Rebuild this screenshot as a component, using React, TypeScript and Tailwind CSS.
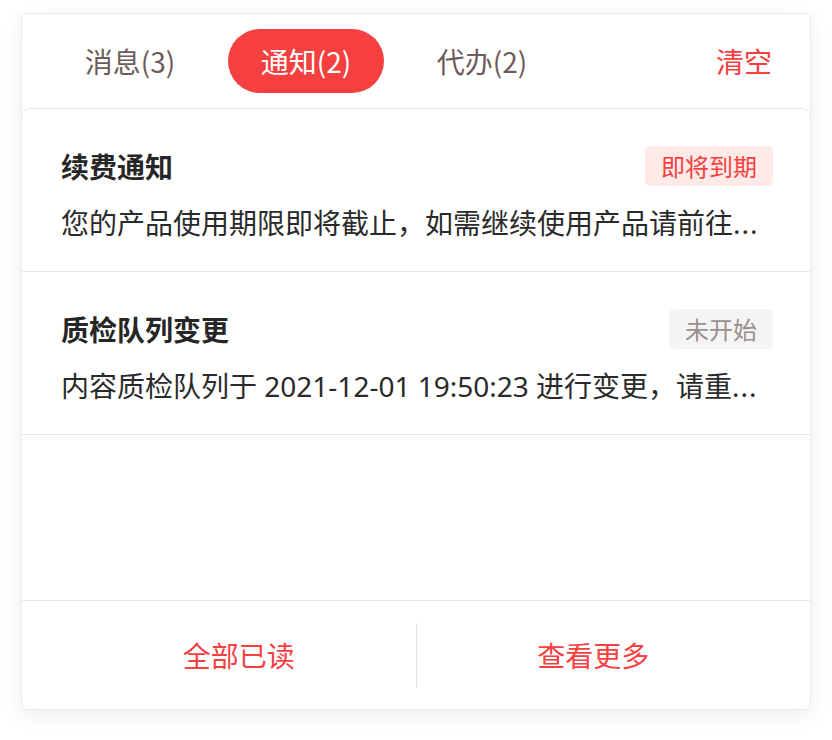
import { useState } from 'react';

type Notice = {
  title: string;
  desc: string;
  tag: string;
  tone: 'red' | 'gray';
};

// descriptions are cut to what fits the row, the panel shows them with a trailing ellipsis
const notices: Notice[] = [
  {
    title: '续费通知',
    desc: '您的产品使用期限即将截止，如需继续使用产品请前往',
    tag: '即将到期',
    tone: 'red',
  },
  {
    title: '质检队列变更',
    desc: '内容质检队列于 2021-12-01 19:50:23 进行变更，请重',
    tag: '未开始',
    tone: 'gray',
  },
];

const tabs = ['消息(3)', '通知(2)', '代办(2)'];

const App = () => {
  const [active, setActive] = useState(1);

  return (
    <div
      className="min-h-screen bg-white pt-[13px] pl-[21px]"
      style={{ fontFamily: '"Noto Sans CJK SC", "Noto Sans", sans-serif' }}
    >
      <div className="w-[790px] h-[697px] flex flex-col rounded-[7px] border border-[#ebe8ec] bg-white shadow-[0_6px_22px_rgba(0,0,0,0.07)]">
        {/* Tabs */}
        <div className="h-[94px] flex items-center pl-[30px] pr-[38px]">
          <div className="flex gap-[20px]">
            {tabs.map((t, i) => (
              <button
                key={t}
                onClick={() => setActive(i)}
                className={
                  i === active
                    ? 'w-[156px] h-[64px] rounded-full bg-[#f5403f] text-white text-[28px] leading-none'
                    : 'w-[156px] h-[64px] rounded-full text-[#6d5b5b] text-[28px] leading-none'
                }
              >
                {t}
              </button>
            ))}
          </div>
          <button className="ml-auto text-[28px] leading-none text-[#f5403f]">清空</button>
        </div>

        {/* List */}
        <div className="flex-1 flex flex-col rounded-t-[8px] border-t border-[#e7e5ea]">
          <div className="flex-1">
            {notices.map((n) => (
              <div key={n.title} className="pl-[39px] pr-[37px] pt-[37px] pb-[30px] border-b border-[#e7e5ea]">
                <div className="flex items-center justify-between h-[40px]">
                  <span className="text-[28px] font-bold leading-none text-[#262626]">{n.title}</span>
                  <span
                    className={
                      n.tone === 'red'
                        ? 'h-[40px] px-[16px] flex items-center rounded-[5px] bg-[#ffeae8] text-[#f5403f] text-[24px]'
                        : 'h-[40px] px-[16px] flex items-center rounded-[5px] bg-[#f5f4f4] text-[#9b8e8e] text-[24px]'
                    }
                  >
                    {n.tag}
                  </span>
                </div>
                <p className="mt-[19px] h-[36px] leading-[36px] text-[28px] text-[#2a2a2a] whitespace-nowrap font-['Noto_Sans','Noto_Sans_CJK_SC',sans-serif]">
                  {n.desc}
                  <span className="tracking-[1px]">...</span>
                </p>
              </div>
            ))}
          </div>

          {/* Footer */}
          <div className="h-[109px] flex items-center px-[40px] border-t border-[#e7e5ea]">
            <button className="flex-1 text-[28px] text-[#f5403f]">全部已读</button>
            <div className="w-px h-[64px] bg-[#e2e2e2]" />
            <button className="flex-1 text-[28px] text-[#f5403f]">查看更多</button>
          </div>
        </div>
      </div>
    </div>
  );
};

export default App;
